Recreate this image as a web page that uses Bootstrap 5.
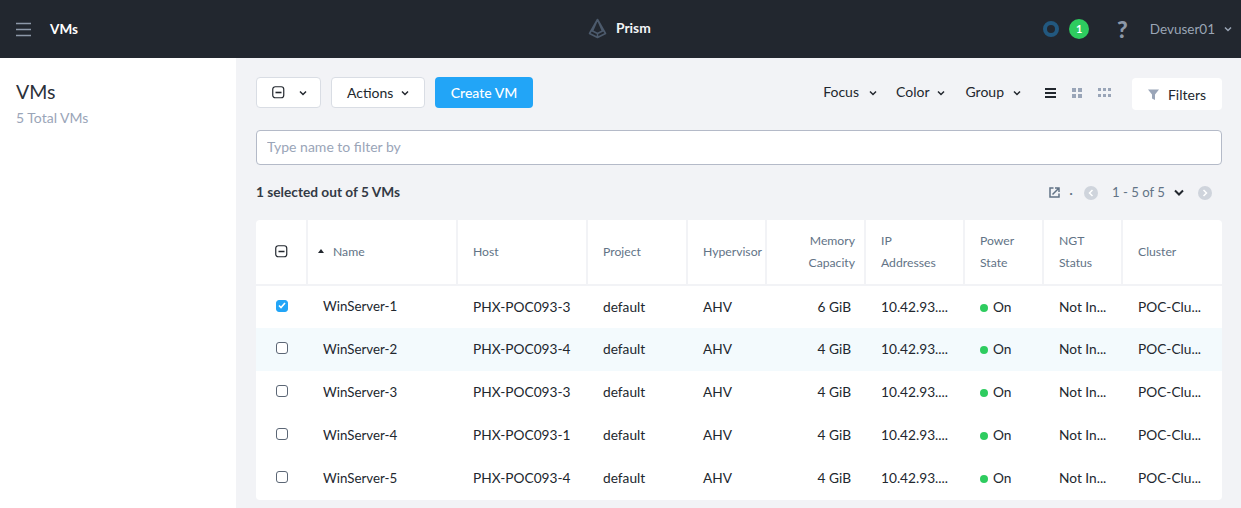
<!DOCTYPE html>
<html lang="en">
<head>
    <meta charset="UTF-8">
    <title>VMs</title>
    <link href="https://cdn.jsdelivr.net/npm/bootstrap@5.3.0/dist/css/bootstrap.min.css" rel="stylesheet">
    <style>
        html, body { height: 100%; overflow: hidden; }
        body { font-family: "Lato", "Liberation Sans", sans-serif; font-size: 14px; color: #22272e; background: #f2f3f6; }
        .top-bar { height: 58px; background: #22272f; padding: 0 9px 0 16px; position: relative; }
        .top-title { color: #fff; font-weight: 700; font-size: 13.5px; margin-left: 19px; }
        .prism-brand { position: absolute; left: 588px; top: 18px; color: #f4f5f7; font-weight: 700; font-size: 13.8px; gap: 9px; }
        .user-name { color: #9aa5b5; font-size: 13.5px; }
        .alert-count { width: 20px; height: 20px; border-radius: 50%; background: #2ecc5f; color: #fff; font-size: 11px; font-weight: 700; }
        .help-mark { color: #8d98a8; font-size: 23px; font-weight: 900; line-height: 1; margin: 0 22px 0 28px; }
        .page-wrap { height: 450px; }
        .side-pane { width: 236px; background: #fff; padding: 22px 16px; flex: none; }
        .side-title { font-size: 19.5px; line-height: 24px; color: #2b313a; }
        .side-sub { color: #9aa5b8; font-size: 14px; line-height: 18px; margin-top: 5px; }
        .main-pane { flex: 1; padding: 19px 19px 0 20px; min-width: 0; }
        .tool-btn { height: 31px; background: #fff; border: 1px solid #d9dde4; border-radius: 4px; color: #22272e; padding: 0 15px; font-size: 14px; }
        .tool-btn:hover { background: #fff; border-color: #d9dde4; color: #22272e; }
        .select-btn { width: 65px; margin-right: 10px; }
        .select-btn svg { flex: none; }
        .select-chev { margin-left: 14px; }
        .actions-btn { width: 94px; }
        .create-btn { height: 31px; width: 98px; margin-left: 10px; background: #22a5f7; border: 0; border-radius: 4px; color: #fff; font-size: 14px; font-weight: 500; padding: 0; }
        .create-btn:hover { background: #22a5f7; color: #fff; }
        .tool-right { height: 31px; }
        .filter-btn { height: 32px; width: 90px; background: #fff; border-radius: 4px; color: #22272e; font-size: 14px; gap: 9px; margin-left: 20px; margin-top: 1px; }
        .menu-text { font-size: 14px; color: #22272e; padding-bottom: 2px; }
        .chev { flex: none; }
        .gap-focus { margin: 0 19px 0 10px; }
        .gap-color { margin: 0 20px 0 8px; }
        .gap-group { margin: 0 24px 0 9px; }
        .search-box { height: 35px; margin-top: 22px; border: 1px solid #b4bac8; border-radius: 4px; background: #fff; font-size: 14px; padding: 0 10px 2px; color: #22272e; }
        .search-box::placeholder { color: #9aa5b8; }
        .search-box:focus { box-shadow: none; border-color: #b4bac8; }
        .count-row { height: 21px; margin-top: 17px; }
        .sel-count { font-weight: 700; font-size: 13.7px; color: #333a45; }
        .pager-text { color: #627386; font-size: 13.2px; margin: 0 9px 0 14px; }
        .dot-sep { color: #627386; margin: 0 11px 0 9px; }
        .pg-circle { width: 14px; height: 14px; border-radius: 50%; background: #cfd4dc; flex: none; }
        .pg-next { margin: 0 10px 0 14px; }
        .vm-card { margin-top: 17px; background: #fff; border-radius: 4px; overflow: hidden; width: 966px; }
        .vm-table { table-layout: fixed; width: 966px; margin: 0; font-size: 13.7px; color: #22272e; }
        .vm-table th, .vm-table td { padding: 0 15px; vertical-align: middle; white-space: nowrap; overflow: hidden; }
        .vm-table th { height: 65px; font-weight: 400; font-size: 12.2px; line-height: 22px; color: #627386; border-bottom: 2px solid #f2f3f6; border-right: 2px solid #f2f3f6; white-space: normal; }
        .vm-table th:last-child { border-right: 0; }
        .vm-table td { height: 43px; border-bottom: 0; padding: 0 15px 0 16px; color: #22272e; }
        .vm-table td:first-child { padding-left: 15px; }
        .vm-table td.name-cell { font-size: 13.3px; }
        .vm-table tbody tr.row-hover td { background: #f3fafd; }
        .vm-table td.mem-cell { text-align: right; padding-right: 14px; }
        .vm-table th.mem-head { padding-right: 9px; }
        .status-dot { display: inline-block; width: 8px; height: 8px; border-radius: 50%; background: #2ecc5f; margin-right: 5px; }
        .vm-check { width: 12px; height: 12px; border: 1px solid #5b6675; border-radius: 3px; display: block; margin: -3px 0 0 5px; background: #fff; }
        .vm-check-on { background: #22a5f7; border-color: #22a5f7; }
        .head-check { display: block; margin: -1px 0 0 4px; }
        .sort-arrow { width: 0; height: 0; border: 3.5px solid transparent; border-bottom: 4px solid #22272e; border-top: 0; display: inline-block; margin: 0 9px 3px 2px; }
        .col-a { width: 51px; } .col-b { width: 150px; } .col-c { width: 130px; } .col-d { width: 100px; } .col-e { width: 79px; }
        .col-f { width: 99px; } .col-g { width: 99px; } .col-h { width: 79px; } .col-i { width: 79px; } .col-j { width: 100px; }
    </style>
</head>
<body>
    <!-- top navigation -->
    <nav class="top-bar d-flex align-items-center">
        <svg width="15" height="15" viewBox="0 0 15 15"><path d="M0 1.5h15M0 7.5h15M0 13.5h15" stroke="#8d98a8" stroke-width="1.6"/></svg>
        <span class="top-title">VMs</span>
        <div class="prism-brand d-flex align-items-center">
            <svg width="19" height="21" viewBox="0 0 19 21" fill="none" stroke="#4c5a6c" stroke-width="1.6" stroke-linejoin="round"><path d="M9.5 1.5 1.5 15.5l8 4 8-4zM9.5 1.5 4.5 13l5 2.5 5-2.5zM9.5 15.5v4"/></svg>
            <span>Prism</span>
        </div>
        <div class="ms-auto d-flex align-items-center">
            <svg width="16" height="16" viewBox="0 0 16 16" style="margin-right:10px"><circle cx="8" cy="8" r="6" fill="none" stroke="#22587f" stroke-width="4"/></svg>
            <span class="alert-count d-flex align-items-center justify-content-center">1</span>
            <span class="help-mark">?</span>
            <span class="user-name">Devuser01</span>
            <svg class="chev" style="margin-left:9px" width="8" height="6" viewBox="0 0 8 6"><path d="M1 1.5 4 4.5 7 1.5" fill="none" stroke="#9aa5b5" stroke-width="1.5"/></svg>
        </div>
    </nav>

    <div class="page-wrap d-flex">
        <aside class="side-pane">
            <div class="side-title">VMs</div>
            <div class="side-sub">5 Total VMs</div>
        </aside>

        <main class="main-pane">
            <!-- toolbar -->
            <div class="d-flex align-items-start">
                <button class="btn tool-btn select-btn d-flex align-items-center" type="button">
                    <svg width="13" height="13" viewBox="0 0 13 13" fill="none" stroke="#22272e"><rect x=".75" y=".75" width="11" height="11" rx="2.5" stroke-width="1.2"/><path d="M3.5 6.5h6" stroke-width="1.6"/></svg>
                    <svg class="select-chev" width="8" height="6" viewBox="0 0 8 6"><path d="M1 1.5 4 4.5 7 1.5" fill="none" stroke="#22272e" stroke-width="1.5"/></svg>
                </button>
                <button class="btn tool-btn actions-btn d-flex align-items-center justify-content-between" type="button">Actions
                    <svg class="chev" width="8" height="6" viewBox="0 0 8 6"><path d="M1 1.5 4 4.5 7 1.5" fill="none" stroke="#22272e" stroke-width="1.5"/></svg>
                </button>
                <button class="btn create-btn" type="button">Create VM</button>

                <div class="tool-right ms-auto d-flex align-items-center">
                    <span class="menu-text">Focus</span>
                    <svg class="chev gap-focus" width="8" height="6" viewBox="0 0 8 6"><path d="M1 1.5 4 4.5 7 1.5" fill="none" stroke="#22272e" stroke-width="1.5"/></svg>
                    <span class="menu-text">Color</span>
                    <svg class="chev gap-color" width="8" height="6" viewBox="0 0 8 6"><path d="M1 1.5 4 4.5 7 1.5" fill="none" stroke="#22272e" stroke-width="1.5"/></svg>
                    <span class="menu-text">Group</span>
                    <svg class="chev gap-group" width="8" height="6" viewBox="0 0 8 6"><path d="M1 1.5 4 4.5 7 1.5" fill="none" stroke="#22272e" stroke-width="1.5"/></svg>
                    <svg width="11" height="10" viewBox="0 0 11 10" fill="#22272e"><rect width="11" height="2"/><rect y="4" width="11" height="2"/><rect y="8" width="11" height="2"/></svg>
                    <svg class="ms-3" width="10" height="10" viewBox="0 0 10 10" fill="#9aa5b8"><rect width="4" height="4"/><rect x="6" width="4" height="4"/><rect y="6" width="4" height="4"/><rect x="6" y="6" width="4" height="4"/></svg>
                    <svg class="ms-3" width="14" height="10" viewBox="0 0 14 10" fill="#9aa5b8"><rect width="3" height="3"/><rect x="5" width="3" height="3"/><rect x="10" width="3" height="3"/><rect y="6" width="3" height="3"/><rect x="5" y="6" width="3" height="3"/><rect x="10" y="6" width="3" height="3"/></svg>
                    <div class="filter-btn align-self-start d-flex align-items-center justify-content-center">
                        <svg width="11" height="11" viewBox="0 0 11 11"><path d="M0 .5h11L7 5.5V11L4 9.5V5.5z" fill="#9aa5b8"/></svg>
                        <span>Filters</span>
                    </div>
                </div>
            </div>

            <input class="form-control search-box" type="text" placeholder="Type name to filter by">

            <div class="count-row d-flex align-items-center">
                <span class="sel-count">1 selected out of 5 VMs</span>
                <div class="ms-auto d-flex align-items-center">
                    <svg width="11" height="11" viewBox="0 0 11 11" fill="none" stroke="#627386" stroke-width="1.5"><path d="M4.5 1H1v9h9V6.5M3.5 7.5 9.5 1.5M6 1h4v4"/></svg>
                    <span class="dot-sep">·</span>
                    <svg class="pg-circle" viewBox="0 0 14 14"><path d="M8.5 4 5.5 7l3 3" fill="none" stroke="#fff" stroke-width="1.5"/></svg>
                    <span class="pager-text">1 - 5 of 5</span>
                    <svg class="chev" width="10" height="7" viewBox="0 0 10 7"><path d="M1 1.5 5 5.5 9 1.5" fill="none" stroke="#22272e" stroke-width="2"/></svg>
                    <svg class="pg-circle pg-next" viewBox="0 0 14 14"><path d="M5.5 4l3 3-3 3" fill="none" stroke="#fff" stroke-width="1.5"/></svg>
                </div>
            </div>

            <!-- vm list -->
            <div class="vm-card">
                <table class="table vm-table">
                    <colgroup>
                        <col class="col-a"><col class="col-b"><col class="col-c"><col class="col-d"><col class="col-e">
                        <col class="col-f"><col class="col-g"><col class="col-h"><col class="col-i"><col class="col-j">
                    </colgroup>
                    <thead>
                        <tr>
                            <th class="pe-0"><svg class="head-check" width="13" height="13" viewBox="0 0 13 13" fill="none" stroke="#22272e"><rect x=".75" y=".75" width="11" height="11" rx="2.5" stroke-width="1.2"/><path d="M3.5 6.5h6" stroke-width="1.6"/></svg></th>
                            <th class="pe-0 ps-2"><span class="sort-arrow"></span>Name</th>
                            <th>Host</th>
                            <th>Project</th>
                            <th class="pe-0">Hypervisor</th>
                            <th class="text-end mem-head">Memory<br>Capacity</th>
                            <th>IP<br>Addresses</th>
                            <th>Power<br>State</th>
                            <th>NGT<br>Status</th>
                            <th>Cluster</th>
                        </tr>
                    </thead>
                    <tbody id="vm-rows"></tbody>
                </table>
            </div>
        </main>
    </div>

    <script>
        const vms = [
            ['WinServer-1', 'PHX-POC093-3', '6 GiB'],
            ['WinServer-2', 'PHX-POC093-4', '4 GiB'],
            ['WinServer-3', 'PHX-POC093-3', '4 GiB'],
            ['WinServer-4', 'PHX-POC093-1', '4 GiB'],
            ['WinServer-5', 'PHX-POC093-4', '4 GiB']
        ];
        const tick = '<span class="vm-check vm-check-on d-flex align-items-center justify-content-center"><svg width="8" height="7" viewBox="0 0 8 7"><path d="M1 3.5 3 5.5 7 1" fill="none" stroke="#fff" stroke-width="1.6"/></svg></span>';
        const box = '<span class="vm-check"></span>';
        document.getElementById('vm-rows').innerHTML = vms.map((vm, i) => `
            <tr class="${i === 1 ? 'row-hover' : ''}">
                <td class="pe-0">${i === 0 ? tick : box}</td>
                <td class="name-cell">${vm[0]}</td>
                <td>${vm[1]}</td>
                <td>default</td>
                <td>AHV</td>
                <td class="mem-cell">${vm[2]}</td>
                <td>10.42.93....</td>
                <td><span class="status-dot"></span>On</td>
                <td>Not In...</td>
                <td>POC-Clu...</td>
            </tr>`).join('');
    </script>
    <script src="https://cdn.jsdelivr.net/npm/bootstrap@5.3.0/dist/js/bootstrap.bundle.min.js"></script>
</body>
</html>
